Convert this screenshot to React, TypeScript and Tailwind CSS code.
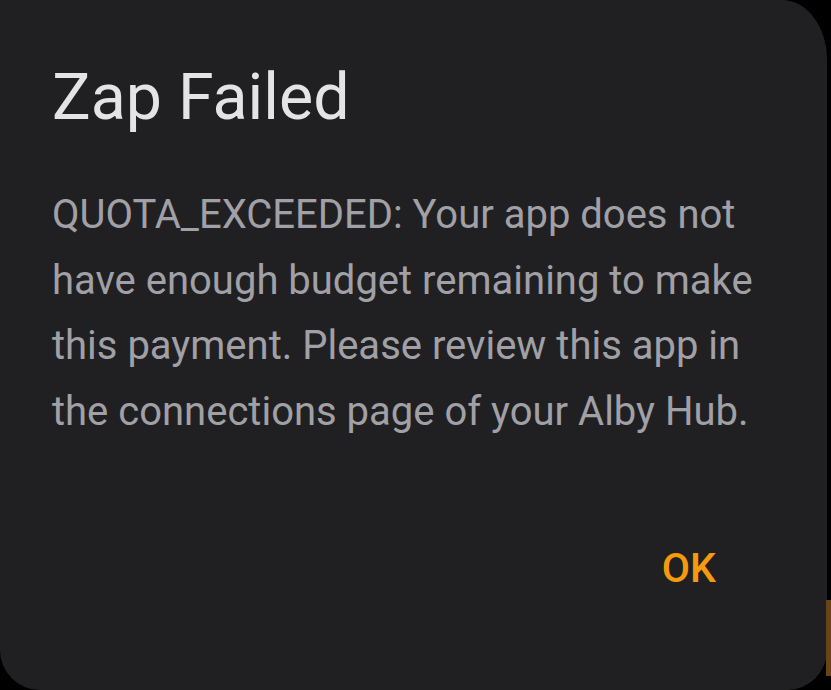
import React from "react";

function ZapFailedDialog(): React.ReactElement {
  return (
    <div className="w-[827px] h-[690px] bg-[#202022] rounded-tr-[45px_60px] rounded-br-[40px] rounded-bl-[40px] flex flex-col pl-[52px] pr-[40px] pt-[61px]">
      <h1 className="text-[64.5px] leading-[72px] text-[#e4e4e6] font-normal">
        Zap Failed
      </h1>
      <p className="mt-[49px] text-[40px] leading-[65.7px] text-[#a0a0a6]">
        QUOTA_EXCEEDED: Your app does not have enough budget remaining to make
        this payment. Please review this app in the connections page of your
        Alby Hub.
      </p>
      <div className="flex justify-end mt-[103px] pr-[71px]">
        <button className="text-[41px] font-medium text-[#f59a0e] leading-none">
          OK
        </button>
      </div>
    </div>
  );
}

export default function App(): React.ReactElement {
  return (
    <div
      className="relative w-[831px] h-[690px] bg-black overflow-hidden"
      style={{ fontFamily: "Roboto, 'Noto Sans', sans-serif" }}
    >
      <ZapFailedDialog />
      <div className="absolute left-[826px] top-[600px] w-[5px] h-[76px] bg-[#6b4318]" />
    </div>
  );
}
